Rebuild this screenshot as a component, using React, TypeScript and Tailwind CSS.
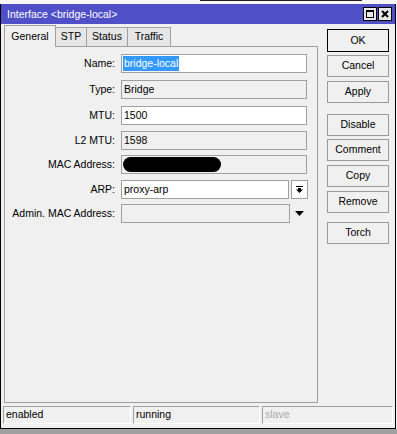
import React from "react";

const F = "font-['Tahoma','Liberation_Sans',Arial,sans-serif]";

function Row({ label, top, children }: { label: string; top: number; children: React.ReactNode }) {
  return (
    <div className="flex items-center h-[19px]" style={{ marginTop: top }}>
      <div className="w-[110px] text-right text-black leading-none">{label}</div>
      <div className="ml-[6px] flex items-center">{children}</div>
    </div>
  );
}

function Btn({ label, top, def }: { label: string; top: number; def?: boolean }) {
  return (
    <div
      className={
        def
          ? "h-[23px] w-[62px] border border-black bg-[#f0f0f0] flex items-center justify-center text-black"
          : "h-[22px] w-[62px] border border-[#9a9a9a] bg-[#f0f0f0] flex items-center justify-center text-black"
      }
      style={{ marginTop: top }}
    >
      {label}
    </div>
  );
}

export default function App() {
  return (
    <div className={`w-[397px] h-[434px] flex flex-col bg-[#f0f0f0] text-[10.5px] ${F}`}>
      {/* background strip above window */}
      <div className="h-[4px] bg-[#f6f6f6] flex">
        <div className="ml-[200px] w-[162px] h-[1px] bg-[#222]" />
      </div>
      {/* window */}
      <div className="w-[396px] h-[425px] flex flex-col border-l border-r border-b border-black">
        {/* title bar */}
        <div className="h-[20px] bg-[#4f4fc8] flex items-center justify-between pl-[6px] pr-[3px]">
          <span className="text-white leading-none">Interface &lt;bridge-local&gt;</span>
          <div className="flex gap-[1px]">
            <div className="w-[14px] h-[14px] bg-[#e8e8e8] border border-black flex items-center justify-center">
              <svg width="8" height="8" viewBox="0 0 8 8">
                <rect x="0.5" y="0.5" width="7" height="7" fill="none" stroke="#000" />
                <rect x="0" y="0" width="8" height="2" fill="#000" />
              </svg>
            </div>
            <div className="w-[14px] h-[14px] bg-[#e8e8e8] border border-black flex items-center justify-center">
              <svg width="8" height="8" viewBox="0 0 8 8">
                <path d="M1 1 L7 7 M7 1 L1 7" stroke="#000" strokeWidth="2" />
              </svg>
            </div>
          </div>
        </div>
        {/* body */}
        <div className="flex">
          {/* left column */}
          <div className="ml-[3px] w-[314px] flex flex-col pt-[1px]">
            <div className="flex items-end h-[22px]">
              <div className="w-[52px] h-[22px] border-t border-l border-r border-[#a0a0a0] bg-[#f0f0f0] flex items-center justify-center text-black">
                General
              </div>
              <div className="w-[31px] h-[20px] border-t border-r border-b border-[#a0a0a0] bg-[#e6e6e6] flex items-center justify-center text-black">
                STP
              </div>
              <div className="w-[41px] h-[20px] border-t border-r border-b border-[#a0a0a0] bg-[#e6e6e6] flex items-center justify-center text-black">
                Status
              </div>
              <div className="w-[43px] h-[20px] border-t border-r border-b border-[#a0a0a0] bg-[#e6e6e6] flex items-center justify-center text-black">
                Traffic
              </div>
              <div className="flex-1 border-b border-[#a0a0a0]" />
            </div>
            <div className="h-[356px] border-l border-r border-b border-[#a0a0a0] flex flex-col pt-[7px]">
              <Row label="Name:" top={0}>
                <div className="w-[186px] h-[19px] border border-[#a0a0a0] bg-white flex items-center pl-[1px]">
                  <span className="bg-[#3399ff] text-white px-[1px] h-[15px] flex items-center">bridge-local</span>
                </div>
              </Row>
              <Row label="Type:" top={7}>
                <div className="w-[186px] h-[19px] border border-[#a0a0a0] bg-[#f0f0f0] flex items-center pl-[2px]">Bridge</div>
              </Row>
              <Row label="MTU:" top={7}>
                <div className="w-[186px] h-[19px] border border-[#a0a0a0] bg-white flex items-center pl-[2px]">1500</div>
              </Row>
              <Row label="L2 MTU:" top={6}>
                <div className="w-[186px] h-[19px] border border-[#a0a0a0] bg-[#f0f0f0] flex items-center pl-[2px]">1598</div>
              </Row>
              <Row label="MAC Address:" top={5}>
                <div className="w-[186px] h-[19px] border border-[#a0a0a0] bg-[#f0f0f0] flex items-center pl-[1px]">
                  <div className="w-[98px] h-[15px] rounded-full bg-black" />
                </div>
              </Row>
              <Row label="ARP:" top={6}>
                <div className="w-[168px] h-[19px] border border-[#a0a0a0] bg-white flex items-center pl-[2px]">proxy-arp</div>
                <div className="ml-[2px] w-[17px] h-[19px] border border-[#a0a0a0] bg-white flex items-center justify-center">
                  <svg width="7" height="7" viewBox="0 0 7 7">
                    <rect x="0" y="0" width="7" height="1" fill="#000" />
                    <rect x="2" y="2" width="3" height="2" fill="#000" />
                    <path d="M0 3.5 L7 3.5 L3.5 7 Z" fill="#000" />
                  </svg>
                </div>
              </Row>
              <Row label="Admin. MAC Address:" top={5}>
                <div className="w-[169px] h-[19px] border border-[#a0a0a0] bg-[#f0f0f0]" />
                <div className="ml-[5px]">
                  <svg width="9" height="5" viewBox="0 0 9 5">
                    <path d="M0 0 L9 0 L4.5 5 Z" fill="#000" />
                  </svg>
                </div>
              </Row>
            </div>
          </div>
          {/* right column */}
          <div className="ml-[9px] flex flex-col">
            <Btn label="OK" top={5} def />
            <Btn label="Cancel" top={3} />
            <Btn label="Apply" top={4} />
            <Btn label="Disable" top={11} />
            <Btn label="Comment" top={3} />
            <Btn label="Copy" top={4} />
            <Btn label="Remove" top={4} />
            <Btn label="Torch" top={9} />
          </div>
        </div>
        {/* status bar */}
        <div className="mt-[3px] pl-[2px] flex gap-[2px] h-[18px]">
          <div className="w-[128px] h-[18px] border-t border-l border-[#a0a0a0] border-b border-r border-b-white border-r-white flex items-center pl-[2px] text-black">
            enabled
          </div>
          <div className="w-[127px] h-[18px] border-t border-l border-[#a0a0a0] border-b border-r border-b-white border-r-white flex items-center pl-[2px] text-black">
            running
          </div>
          <div className="w-[131px] h-[18px] border-t border-l border-[#a0a0a0] border-b border-r border-b-white border-r-white flex items-center pl-[2px] text-[#a8a8a8]">
            slave
          </div>
        </div>
      </div>
      <div className="h-[5px] bg-[#a0a0a0]" />
    </div>
  );
}
